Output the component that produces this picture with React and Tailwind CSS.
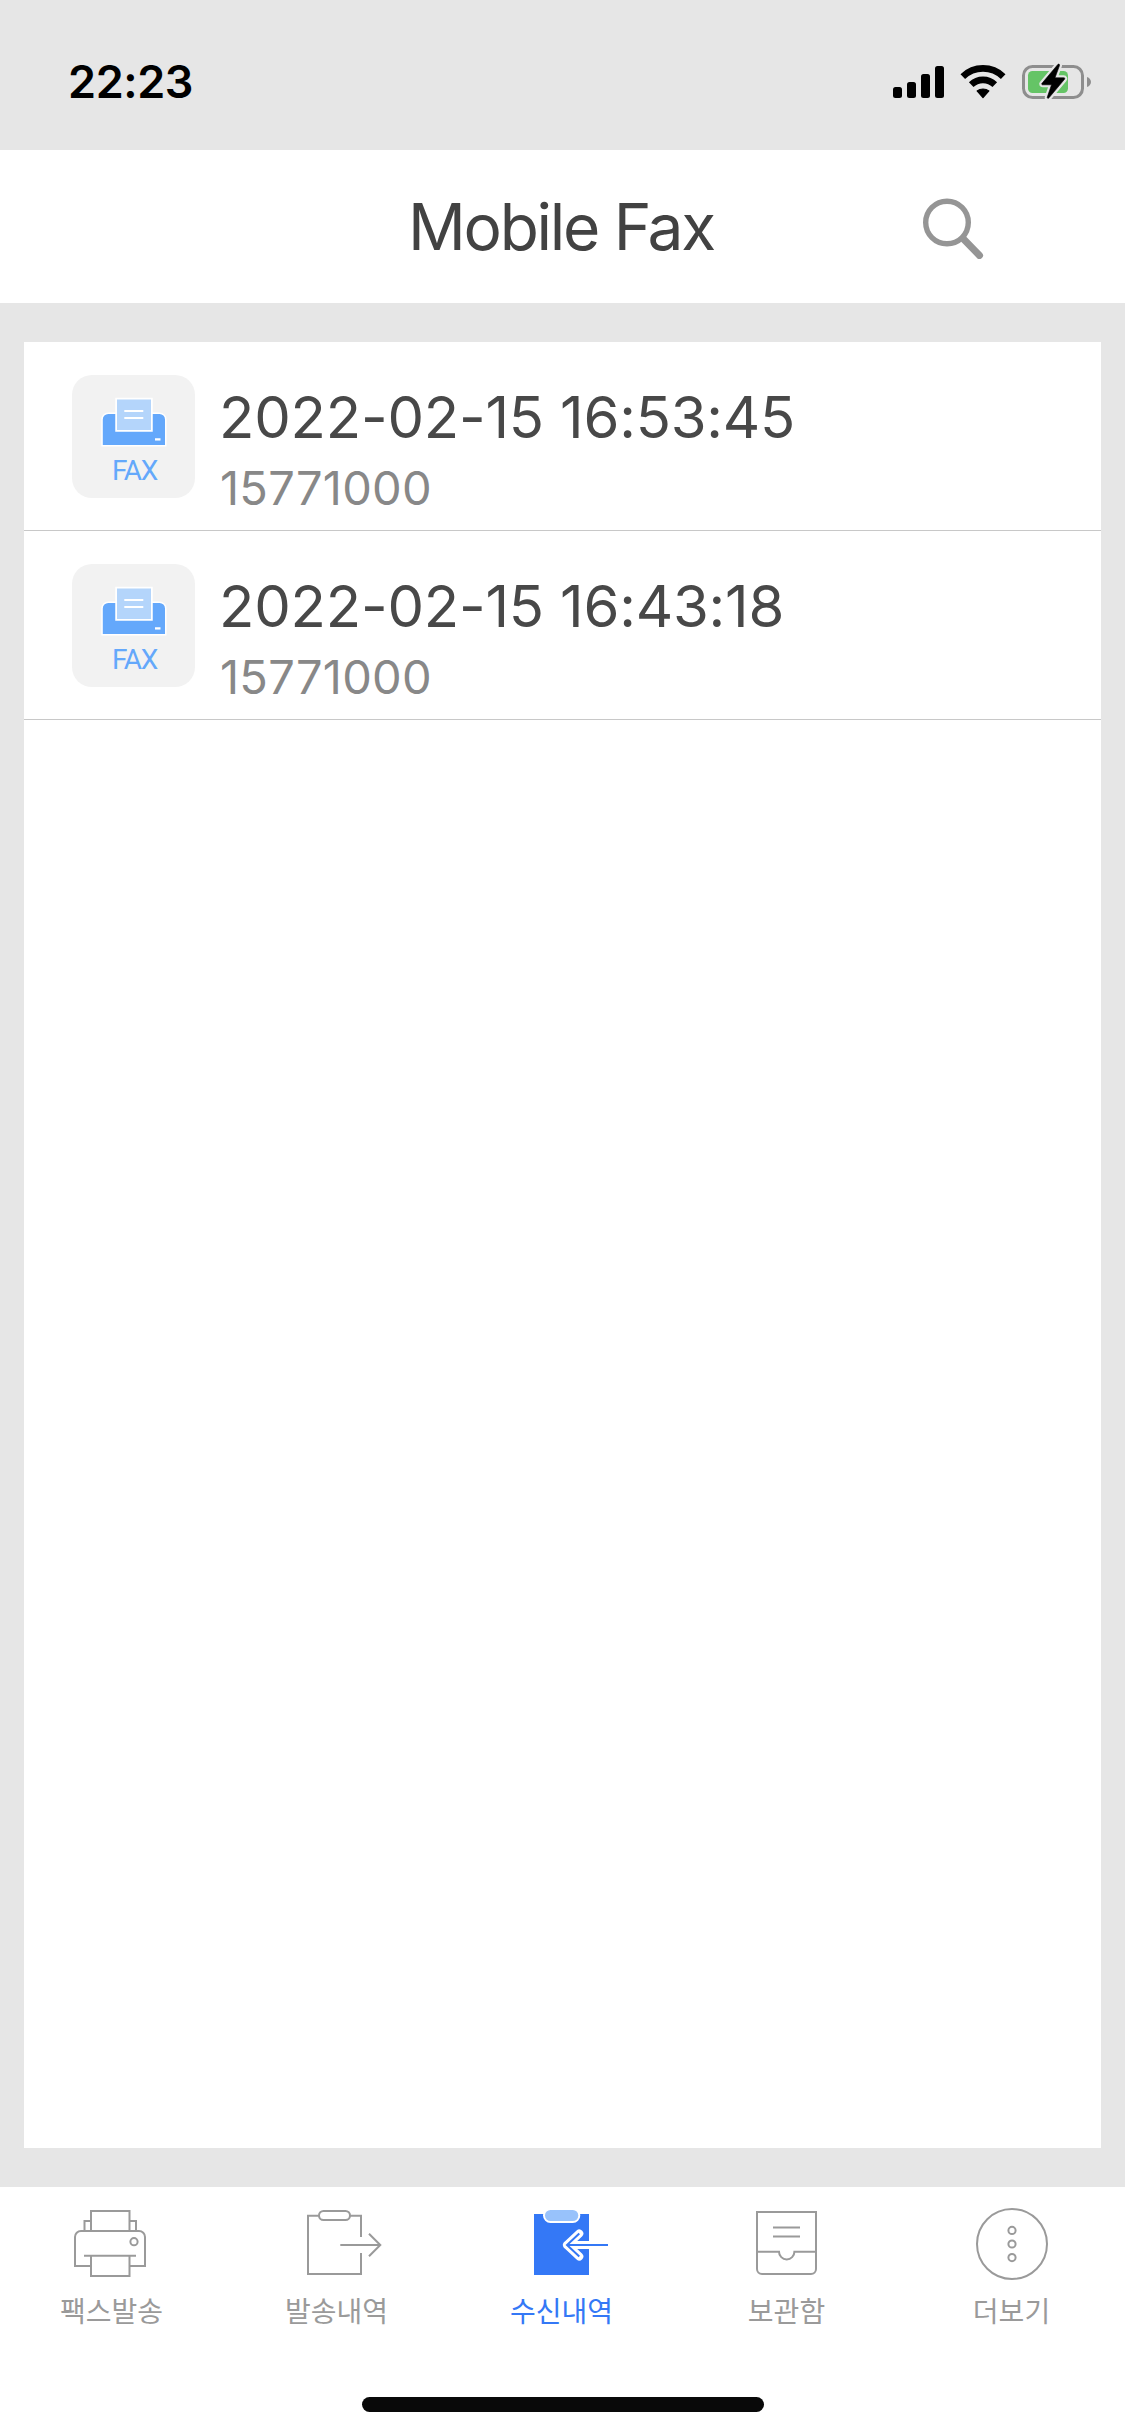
const faxes = [
  { id: 1, receivedAt: '2022-02-15 16:53:45', number: '15771000' },
  { id: 2, receivedAt: '2022-02-15 16:43:18', number: '15771000' },
];

const tabs = [
  { label: '팩스발송', icon: PrinterIcon },
  { label: '발송내역', icon: OutboxIcon },
  { label: '수신내역', icon: InboxIcon, active: true },
  { label: '보관함', icon: ArchiveIcon },
  { label: '더보기', icon: MoreIcon },
];

export default function App() {
  return (
    <div className="flex h-[2436px] w-[1125px] flex-col bg-[#e6e6e6] font-['Inter','Noto_Sans_CJK_KR',sans-serif]">
      <StatusBar />

      <header className="grid h-[153px] shrink-0 grid-cols-[1fr_auto_1fr] items-center bg-white">
        <span />
        <h1 className="pr-[3px] text-[64px] leading-[78px] tracking-[-2.3px] text-[#424242]">Mobile Fax</h1>
        <button type="button" aria-label="Search" className="mr-[139px] justify-self-end">
          <SearchIcon />
        </button>
      </header>

      <main className="mx-6 my-[39px] flex-1 bg-white">
        <ul>
          {faxes.map((fax) => (
            <FaxRow key={fax.id} fax={fax} />
          ))}
        </ul>
      </main>

      <TabBar />
    </div>
  );
}

function StatusBar() {
  return (
    <div className="flex h-[150px] shrink-0 items-start justify-between pt-[53px] pr-[33px] pl-[68px]">
      <span className="text-[45px] leading-[58px] font-semibold tracking-[-0.4px] text-black">22:23</span>
      <div className="flex h-[58px] items-center gap-4">
        <svg viewBox="0 0 51 36" className="h-9 w-[51px]" aria-hidden="true">
          <rect x="0" y="23" width="9" height="11" rx="2.5" />
          <rect x="14" y="18" width="9" height="16" rx="2.5" />
          <rect x="28" y="10" width="9" height="24" rx="2.5" />
          <rect x="42" y="2" width="9" height="32" rx="2.5" />
        </svg>
        <svg viewBox="0 0 46 36" fill="none" stroke="#000" strokeWidth="6.6" className="h-9 w-[46px]" aria-hidden="true">
          <path d="M2.800 12.600a29 29 0 0 1 40.400 0" />
          <path d="M11.200 20.600a17 17 0 0 1 23.600 0" />
          <path
            d="M23 25c-2.200 0-4.200.7-5.900 1.900L23 33.500l5.900-6.600A10 10 0 0 0 23 25z"
            fill="#000"
            strokeWidth="1.200"
            strokeLinejoin="round"
          />
        </svg>
        <BatteryIcon />
      </div>
    </div>
  );
}

function FaxRow({ fax }) {
  return (
    <li className="flex h-[189px] items-start border-b border-[#c8c8c8] pl-12">
      <div className="mt-[33px] flex h-[123px] w-[123px] shrink-0 flex-col rounded-[20px] bg-[#f2f2f2]">
        <svg viewBox="0 0 123 79" className="h-[79px] w-[123px]" aria-hidden="true">
          <path
            d="M30.800 70V44.500a5.500 5.500 0 0 1 5.500-5.500h51.200a5.500 5.500 0 0 1 5.500 5.500V70z"
            fill="#64a8fb"
            stroke="#fff"
            strokeWidth="3"
            paintOrder="stroke"
          />
          <rect x="45" y="24.500" width="34" height="30.500" fill="#b4d5fb" stroke="#fff" strokeWidth="3.500" paintOrder="stroke" />
          <path d="M52.300 36h19M52.300 43h19" stroke="#fff" strokeWidth="2" />
          <path d="M83 64.400h5.500" stroke="#fff" strokeWidth="2.300" />
        </svg>
        <span className="pl-10 font-['Roboto',sans-serif] text-[28px] leading-[33px] tracking-[-1.3px] text-[#64a8fb]">
          FAX
        </span>
      </div>
      <div className="mt-10 ml-6 flex flex-col gap-[7px]">
        <p className="text-[58px] leading-[70px] tracking-[-0.2px] text-[#484848]">{fax.receivedAt}</p>
        <p className="pl-px text-[47px] leading-[57px] tracking-[0.25px] text-[#888]">{fax.number}</p>
      </div>
    </li>
  );
}

function TabBar() {
  return (
    <nav className="flex h-[249px] shrink-0 flex-col items-center justify-between bg-white pt-5 pb-6">
      <div className="grid w-full grid-cols-5">
        {tabs.map(({ label, icon: Icon, active }) => (
          <button
            key={label}
            type="button"
            className={`flex flex-col items-center gap-1.5 ${active ? 'text-[#3478f6]' : 'text-[#9a9a9a]'}`}
          >
            <Icon />
            <span className="pr-0.5 font-['Noto_Sans_CJK_KR',sans-serif] text-[28px] leading-[42px]">{label}</span>
          </button>
        ))}
      </div>
      {/* Home indicator */}
      <div className="h-[15px] w-[402px] rounded-full bg-[#090909]" />
    </nav>
  );
}

function TabSvg({ children }) {
  return (
    <svg
      viewBox="-5 0 91 76"
      fill="none"
      stroke="currentColor"
      strokeWidth="2"
      className="h-[76px] w-[91px]"
      aria-hidden="true"
    >
      {children}
    </svg>
  );
}

function PrinterIcon() {
  return (
    <TabSvg>
      <path d="M19 59H3V30a6 6 0 0 1 6-6h58a6 6 0 0 1 6 6v29H57.500" />
      <path d="M19 24V4h38.500v20M12.500 24V14H19M57.500 14H64v10" />
      <path d="M12 48.700h52M19 49v20h38.500V49" />
      <circle cx="62" cy="34.700" r="3.600" />
    </TabSvg>
  );
}

function OutboxIcon() {
  return (
    <TabSvg>
      <path d="M22 8.700H11V67h53V46M64 30V8.700H53" />
      <rect x="22" y="4" width="31" height="9" rx="4.500" />
      <path d="M43.300 38h40M72 26.700 83.300 38 72 49.300" />
    </TabSvg>
  );
}

function InboxIcon() {
  return (
    <TabSvg>
      <path d="M12 7h55v61H12z" fill="currentColor" stroke="none" />
      <rect x="23" y="3" width="33.300" height="11" rx="5.500" fill="#98c2fb" stroke="#fff" strokeWidth="4" paintOrder="stroke" />
      <path
        d="M70 38H45M57.300 26.500 45 38l12.300 11.500"
        stroke="#fff"
        strokeWidth="8"
        strokeLinecap="round"
        strokeLinejoin="round"
      />
      <path d="M86 38H45M57.300 26.500 45 38l12.300 11.500" />
    </TabSvg>
  );
}

function ArchiveIcon() {
  return (
    <TabSvg>
      <path d="M10 5h59v57a5 5 0 0 1-5 5H15a5 5 0 0 1-5-5z" />
      <path d="M10 44.700h22a7.700 7.700 0 0 0 15.400 0H69" />
      <path d="M26 20.400h27M26 29.400h27" />
    </TabSvg>
  );
}

function MoreIcon() {
  return (
    <TabSvg>
      <circle cx="40" cy="37" r="35" />
      <circle cx="40" cy="23.400" r="3.600" />
      <circle cx="40" cy="37" r="3.600" />
      <circle cx="40" cy="50.600" r="3.600" />
    </TabSvg>
  );
}

function SearchIcon() {
  return (
    <svg viewBox="0 0 64 64" fill="none" stroke="#959595" className="h-16 w-16" aria-hidden="true">
      <circle cx="25" cy="27.500" r="21.300" strokeWidth="5.400" />
      <path d="m41 43.500 16.500 17" strokeWidth="7" strokeLinecap="round" />
    </svg>
  );
}

function BatteryIcon() {
  const bolt = 'M35.800 1.500 20 20.300c-.6.800-.2 1.500.7 1.500h8.800L25.300 34c-.4 1.300.8 1.800 1.700.8l15.500-18.500c.6-.8.2-1.500-.7-1.500H33l4.500-12.200c.4-1.300-.8-2-1.700-1.100z';

  return (
    <svg viewBox="0 0 70 38" className="h-[38px] w-[70px] overflow-visible" aria-hidden="true">
      <rect x="1.500" y="3.500" width="59" height="31" rx="9" fill="none" stroke="#8e8e8e" strokeWidth="3" />
      <rect x="6" y="8" width="40" height="22" rx="4.500" fill="#65c466" />
      <path d="M65 14c2.500.8 4 2.800 4 5s-1.500 4.200-4 5z" fill="#8e8e8e" />
      <path d={bolt} stroke="#e6e6e6" strokeWidth="5" strokeLinejoin="round" />
      <path d={bolt} stroke="#000" strokeWidth="0.600" />
    </svg>
  );
}
